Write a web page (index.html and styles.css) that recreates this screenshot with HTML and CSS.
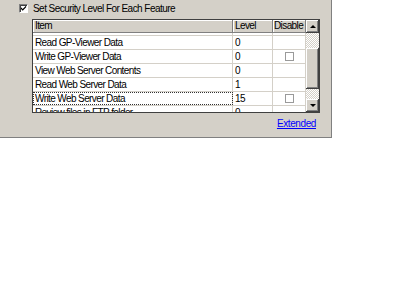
FILE: index.html
```html
<!DOCTYPE html>
<html lang="en">
<head>
  <meta charset="UTF-8">
  <title>Security Settings</title>
  <link rel="stylesheet" href="styles.css">
</head>
<body>
  <div class="panel">
    <label class="check-row">
      <span class="cb">
        <svg width="7" height="7" viewBox="0 0 7 7"><path d="M0 2 L2 4 L6 0 L6 2 L2 6 L0 4 Z" fill="#000"/></svg>
      </span>
      Set Security Level For Each Feature
    </label>

    <div class="grid">
      <div class="grid-main">
        <div class="grid-head">
          <div class="cell c-item">Item</div>
          <div class="cell c-level">Level</div>
          <div class="cell c-dis">Disable</div>
        </div>
        <div class="grid-body">
          <div class="rows">
            <div class="row">
              <div class="cell c-item"></div>
              <div class="cell c-level"></div>
              <div class="cell c-dis"></div>
            </div>
            <div class="row">
              <div class="cell c-item">Read GP-Viewer Data</div>
              <div class="cell c-level">0</div>
              <div class="cell c-dis"></div>
            </div>
            <div class="row">
              <div class="cell c-item">Write GP-Viewer Data</div>
              <div class="cell c-level">0</div>
              <div class="cell c-dis"><span class="mini-cb"></span></div>
            </div>
            <div class="row">
              <div class="cell c-item">View Web Server Contents</div>
              <div class="cell c-level">0</div>
              <div class="cell c-dis"></div>
            </div>
            <div class="row">
              <div class="cell c-item">Read Web Server Data</div>
              <div class="cell c-level">1</div>
              <div class="cell c-dis"></div>
            </div>
            <div class="row">
              <div class="cell c-item focus">Write Web Server Data</div>
              <div class="cell c-level">15</div>
              <div class="cell c-dis"><span class="mini-cb"></span></div>
            </div>
            <div class="row">
              <div class="cell c-item">Review files in FTP folder</div>
              <div class="cell c-level">0</div>
              <div class="cell c-dis"></div>
            </div>
          </div>
        </div>
      </div>

      <div class="vscroll">
        <div class="sb-btn"><span class="arrow up"></span></div>
        <div class="sb-track top"></div>
        <div class="sb-thumb"></div>
        <div class="sb-track bottom"></div>
        <div class="sb-btn"><span class="arrow down"></span></div>
      </div>
    </div>

    <div class="links"><a href="#">Extended</a></div>
  </div>
</body>
</html>
```

FILE: styles.css
```css
body {
  margin: 0;
  background: #ffffff;
  font-family: 'Liberation Sans', Arial, sans-serif;
  font-size: 10px;
  color: #000;
}

.panel {
  box-sizing: border-box;
  width: 332px;
  height: 138px;
  background: #d4d0c8;
  border-right: 1px solid #808080;
  border-bottom: 1px solid #808080;
  padding: 3px 0 0 19px;
  display: flex;
  flex-direction: column;
}

.check-row {
  display: flex;
  align-items: center;
  gap: 5px;
  height: 10px;
  letter-spacing: -0.55px;
}

.cb {
  box-sizing: border-box;
  width: 9px;
  height: 9px;
  background: #ffffff;
  border-top: 1px solid #808080;
  border-left: 1px solid #808080;
  border-right: 1px solid #ffffff;
  border-bottom: 1px solid #ffffff;
  box-shadow: inset 1px 1px 0 #404040;
  display: flex;
  align-items: center;
  justify-content: center;
  padding: 1px 0 0 1px;
}

.cb svg {
  display: block;
}

.grid {
  box-sizing: border-box;
  width: 288px;
  height: 94px;
  margin: 6px 0 0 13px;
  background: #ffffff;
  border: 1px solid #404040;
  display: flex;
}

.grid-main {
  flex: 1;
  display: flex;
  flex-direction: column;
  overflow: hidden;
}

.grid-head {
  display: flex;
  height: 13px;
  background: #d4d0c8;
  border-bottom: 1px solid #808080;
  box-sizing: border-box;
}

.grid-head .cell {
  border-right: 1px solid #808080;
  box-shadow: inset 1px 1px 0 #ffffff;
  line-height: 12px;
}

.grid-body {
  flex: 1;
  overflow: hidden;
}

.rows {
  margin-top: -11px;
}

.row {
  display: flex;
  height: 14px;
  box-sizing: border-box;
  border-bottom: 1px solid #d4d0c8;
}

.cell {
  box-sizing: border-box;
  padding-left: 2px;
  line-height: 13px;
  white-space: nowrap;
  overflow: hidden;
  letter-spacing: -0.6px;
}

.row .cell {
  border-right: 1px solid #d4d0c8;
}

.c-item {
  width: 200px;
}

.c-level {
  width: 40px;
}

.c-dis {
  width: 33px;
}

.grid-head .c-dis {
  padding-left: 1px;
}

.row .c-dis {
  display: flex;
  align-items: center;
  justify-content: center;
  padding: 0;
}

.focus {
  outline: 1px dotted #333;
  outline-offset: -1px;
}

.mini-cb {
  box-sizing: border-box;
  width: 9px;
  height: 9px;
  border: 1px solid #9a9a9a;
  background: #ffffff;
}

.vscroll {
  width: 13px;
  display: flex;
  flex-direction: column;
}

.sb-btn {
  box-sizing: border-box;
  height: 13px;
  background: #d4d0c8;
  box-shadow: inset -1px -1px 0 #404040, inset 1px 1px 0 #ffffff, inset -2px -2px 0 #808080;
  display: flex;
  align-items: center;
  justify-content: center;
}

.arrow {
  width: 0;
  height: 0;
  border-left: 3px solid transparent;
  border-right: 3px solid transparent;
}

.arrow.up {
  border-bottom: 3px solid #000;
}

.arrow.down {
  border-top: 3px solid #000;
}

.sb-track {
  background-color: #ece9e4;
  background-image: repeating-conic-gradient(#ffffff 0 25%, #d4d0c8 0 50%);
  background-size: 2px 2px;
}

.sb-track.top {
  height: 15px;
}

.sb-track.bottom {
  flex: 1;
}

.sb-thumb {
  height: 41px;
  background: #d4d0c8;
  box-shadow: inset -1px -1px 0 #404040, inset 1px 1px 0 #ffffff, inset -2px -2px 0 #808080;
}

.links {
  margin: 5px 15px 0 0;
  text-align: right;
  line-height: 12px;
}

.links a {
  color: #0000ff;
  text-decoration: underline;
  letter-spacing: -0.4px;
}
```
